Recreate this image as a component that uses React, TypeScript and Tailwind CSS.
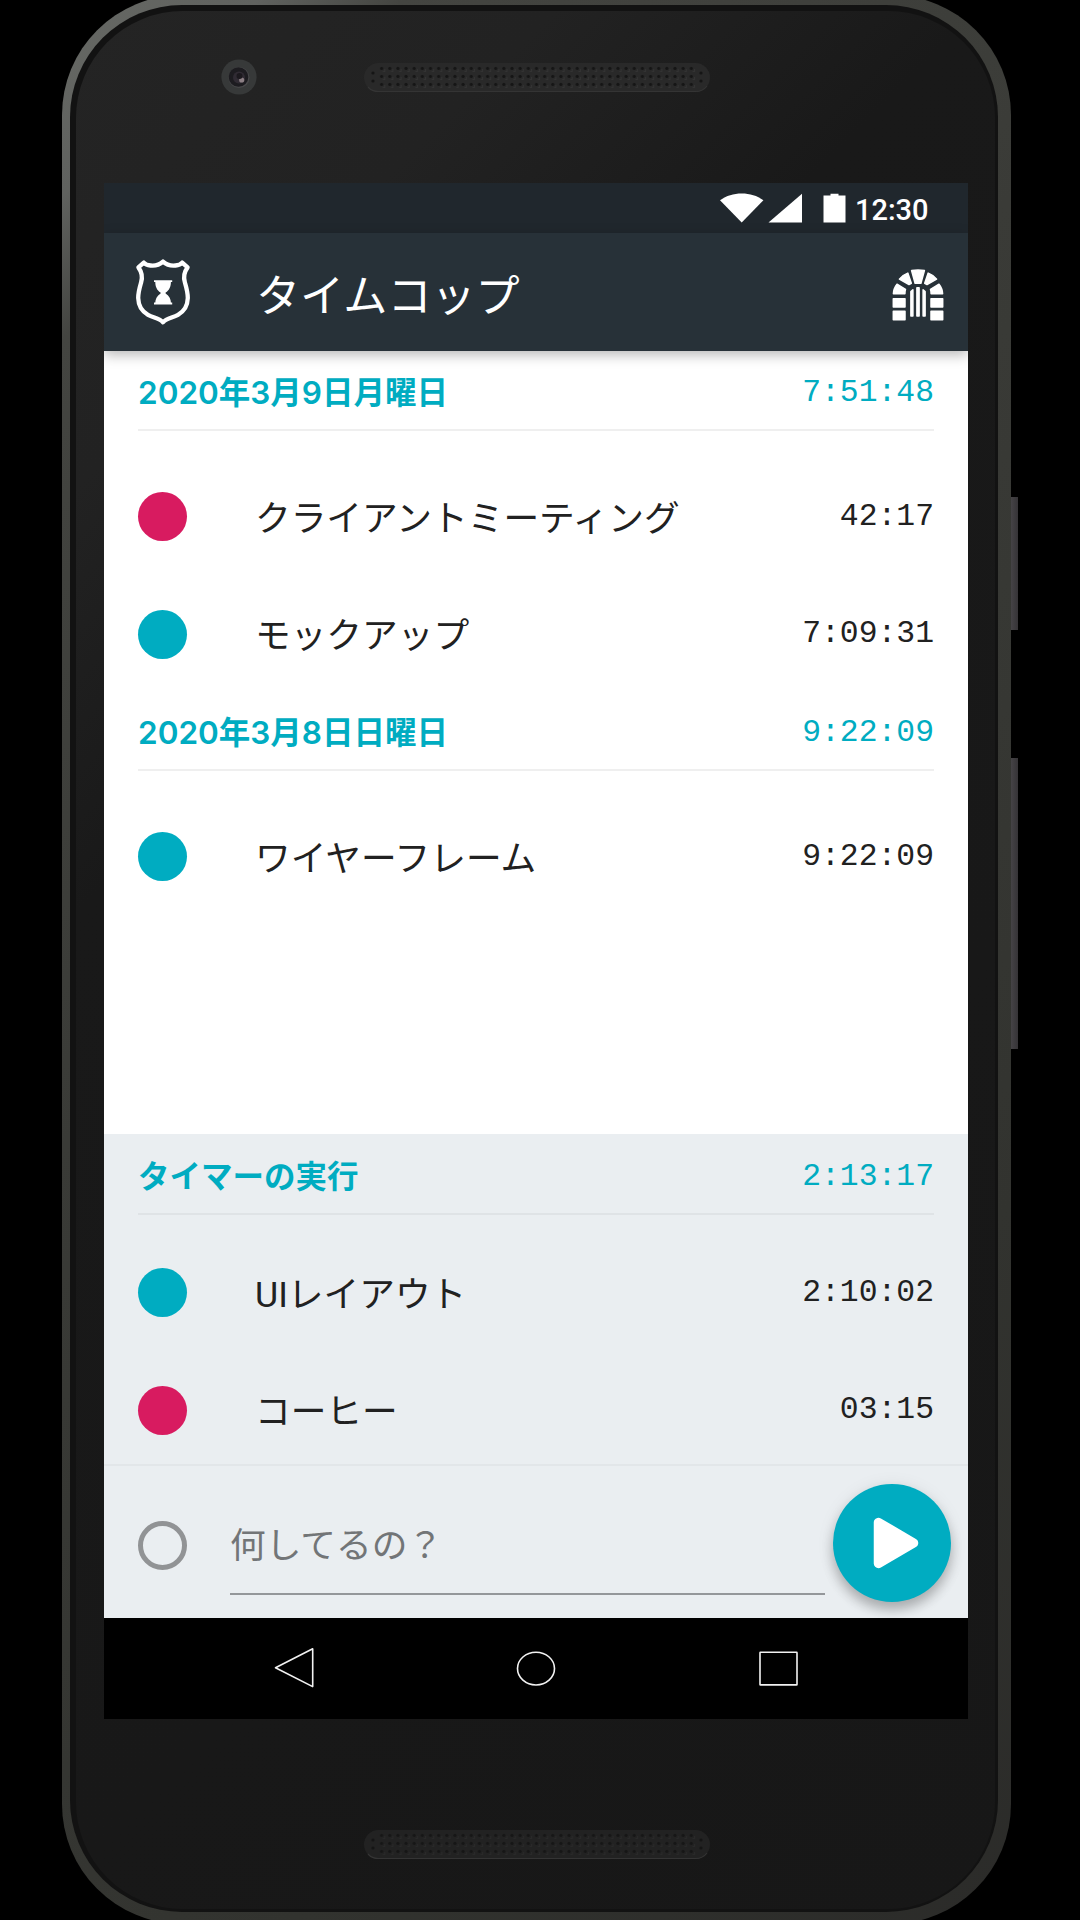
import React from "react";

const CJK = "font-['Noto_Sans_CJK_JP',sans-serif]";
const BODY = "font-['Roboto','Noto_Sans_CJK_JP',sans-serif]";
const MONO = "font-['Liberation_Mono','Noto_Sans_CJK_JP',monospace]";

type Entry = { name: string; time: string; color: "pink" | "cyan" };

function Speaker({ dim }: { dim?: boolean }) {
  const id = dim ? "mesh-bottom" : "mesh-top";
  return (
    <svg width="348" height="31" viewBox="0 0 348 31" className="block">
      <defs>
        <pattern id={id} width="8.15" height="8" patternUnits="userSpaceOnUse" x="15" y="3">
          <circle cx="3.6" cy="3.4" r="1.6" fill={dim ? "#161616" : "#151515"} />
          <path d="M5 6.4h1.8V4" stroke={dim ? "#292929" : "#333"} strokeWidth="1" fill="none" />
        </pattern>
      </defs>
      <rect x="1" y="1" width="346" height="29" rx="14.5" fill={dim ? "#222222" : "#292929"} />
      <path d="M5 25C8 28.500 11 29.500 15.500 29.500H332.500C337 29.500 341 28 344 24" stroke="#343434" strokeWidth="1.2" fill="none" />
      <rect x="15" y="3" width="318" height="24" fill={`url(#${id})`} />
      {[10, 338].map((x) => (
        <g key={x} fill="#151515">
          <circle cx={x} cy="11" r="1.6" />
          <circle cx={x} cy="19" r="1.6" />
        </g>
      ))}
    </svg>
  );
}

function Camera() {
  return (
    <svg width="36" height="36" viewBox="0 0 36 36" className="block">
      <circle cx="18" cy="18" r="17.600" fill="#373939" />
      <circle cx="18" cy="18.500" r="10.500" fill="#48484a" />
      <circle cx="17.500" cy="18" r="9.800" fill="#1d1c20" />
      <circle cx="18" cy="18.500" r="6" fill="#302b33" />
      <circle cx="20.700" cy="21" r="2.600" fill="#8c7f84" />
      <circle cx="18.500" cy="17" r="3" fill="#1c191e" />
    </svg>
  );
}

function StatusBar() {
  return (
    <div className="flex h-[50px] items-center justify-end bg-[#20272d] pr-[39px]">
      <svg width="126" height="31" viewBox="0 0 126 31" fill="#fff" className="mr-[9px] block">
        <path d="M0 7.300C6.500 2.600 13.500.5 21.700.5S37 2.600 43.400 7.300L21.700 29.500z" />
        <path d="M82 .8v28.700H48.500z" />
        <path d="M103.500 2.500h7V.700h8v1.800h7v27h-22z" />
      </svg>
      <span className="relative top-[2px] w-[74px] whitespace-nowrap font-['Roboto',sans-serif] text-[29px] font-medium leading-none text-white">
        12:30
      </span>
    </div>
  );
}

function ShieldIcon() {
  return (
    <svg width="56" height="68" viewBox="0 0 56 68" className="block">
      <path
        d="M28 3.600C24.500 6.800 20 8 15.500 7.500C12.500 7.200 10 6 8.800 4.600L3.400 9.400C6.800 14 7.800 19 6.100 24.500C4.500 30 3.200 34 3.200 40C3.400 47 6.700 53.300 13 56.800C18.500 59.800 24.500 60.300 28 64.200C31.500 60.300 37.500 59.800 43 56.800C49.300 53.300 52.600 47 52.800 40C52.800 34 51.500 30 49.900 24.500C48.200 19 49.200 14 52.600 9.400L47.200 4.600C46 6 43.500 7.200 40.500 7.500C36 8 31.500 6.800 28 3.600Z"
        fill="none"
        stroke="#fff"
        strokeWidth="4.300"
        strokeLinejoin="round"
      />
      <path
        d="M19 22.200h18.200v1.800h-1.300c0 4.500-1.500 8.200-5.300 10.600v.8c3.800 2.400 5.300 6.100 5.300 9.100h1.300v1.900H19v-1.900h1.300c0-3 1.500-6.700 5.300-9.100v-.8c-3.800-2.400-5.300-6.100-5.300-10.600H19z"
        fill="#fff"
      />
    </svg>
  );
}

function DoorIcon() {
  return (
    <svg width="52" height="52" viewBox="0 0 52 52" fill="#fff" stroke="#fff" strokeWidth="1.500" strokeLinejoin="round" className="block">
      <path d="M19.600 1.600C24 .7 28 .7 32.400 1.600L28.900 14.200H23.100z" />
      <path d="M15.800 4.100L19.300 14.300L17 15.500L7.400 10.100C9.500 7.500 12.500 5.300 15.800 4.100z" />
      <path d="M36.200 4.100L32.700 14.300L35 15.500L44.600 10.100C42.500 7.500 39.500 5.300 36.200 4.100z" />
      <path d="M5 15.200L13.500 20.300C13 21.800 12.900 23 12.900 24.800H1.400C1.500 21 2.800 18 5 15.200z" />
      <path d="M47 15.200L38.500 20.300C39 21.800 39.100 23 39.100 24.800H50.600C50.500 21 49.200 18 47 15.200z" />
      <path d="M1.300 29.800h11.700v8.200H1.300zM39 29.800h11.700v8.200H39zM1.300 42.300h11.700v8.400H1.300zM39 42.300h11.700v8.400H39z" />
      <path d="M24.900 18.800h2.200v28.200h-2.200zM18.900 22.500l2-1.800v26.300h-2zM33.100 22.500l-2-1.800v26.300h2z" />
    </svg>
  );
}

function AppBar() {
  return (
    <header className="relative z-10 flex h-[118px] items-center bg-[#273138] pl-[31px] pr-[24px] shadow-[0_4px_12px_rgba(0,0,0,0.28)]">
      <ShieldIcon />
      <h1 className={`ml-[65px] mt-[3px] flex-1 whitespace-nowrap text-[44.100px] leading-none text-white ${CJK}`}>タイムコップ</h1>
      <div className="mt-[5px]">
        <DoorIcon />
      </div>
    </header>
  );
}

function SectionHeader({ title, time, height, line }: { title: string; time: string; height: string; line: string }) {
  return (
    <div className={`mx-[34px] flex items-end justify-between border-b-2 ${line} ${height}`}>
      <h2 className="mb-[16px] whitespace-nowrap font-['Inter','Noto_Sans_CJK_JP',sans-serif] text-[31.500px] font-semibold leading-[40px] text-[#00acc1]">
        {title}
      </h2>
      <span className={`mb-[16px] text-[31.400px] leading-[40px] text-[#00acc1] ${MONO}`}>{time}</span>
    </div>
  );
}

function TimerRow({ entry }: { entry: Entry }) {
  return (
    <div className="flex h-[117.500px] items-center px-[34px]">
      <span className={`size-[49px] rounded-full ${entry.color === "pink" ? "bg-[#d81b60]" : "bg-[#00acc1]"}`} />
      <span className={`ml-[68px] mt-[4px] flex-1 whitespace-nowrap text-[35.700px] leading-[40px] text-[#212121] ${BODY}`}>
        {entry.name}
      </span>
      <span className={`text-[31.400px] leading-[40px] text-[#212121] ${MONO}`}>{entry.time}</span>
    </div>
  );
}

function NewTimer() {
  return (
    <div className="relative -mt-[5px] flex h-[154px] items-center border-t-2 border-[#e2e6e9] pl-[34px] pr-[16px]">
      <span className="mt-[6px] size-[49px] shrink-0 rounded-full border-[5px] border-[#919395]" />
      <div className="ml-[43px] mt-[20px] h-[86px] w-[595px] shrink-0 border-b-2 border-[#94979a]">
        <span className={`relative top-[14px] whitespace-nowrap text-[35.700px] leading-[40px] text-[#727577] ${CJK}`}>
          何してるの？
        </span>
      </div>
      <button className="ml-[8px] mt-[2px] flex size-[118px] shrink-0 items-center justify-center rounded-full bg-[#00acc1] shadow-[0_8px_12px_rgba(0,0,0,0.24),0_2px_18px_rgba(0,0,0,0.08)]">
        <svg width="46" height="52" viewBox="0 0 46 52" className="ml-[8px] block">
          <path d="M5.500 5.500V46.500L40.500 26z" fill="#fff" stroke="#fff" strokeWidth="9.500" strokeLinejoin="round" />
        </svg>
      </button>
    </div>
  );
}

function NavBar() {
  return (
    <nav className="flex h-[101px] items-center bg-black pb-[2px] pl-[168px] pr-[168px]">
      <svg width="528" height="44" viewBox="0 0 528 44" fill="none" stroke="#f2f2f2" strokeWidth="1.600" strokeLinejoin="round" className="block">
        <path d="M3.500 21.700L40.700 2.800V40.600z" />
        <ellipse cx="264" cy="22.600" rx="18.500" ry="16.400" />
        <rect x="488" y="6.300" width="37" height="32.600" rx="0.500" />
      </svg>
    </nav>
  );
}

export default function App() {
  return (
    <div className="h-[1920px] w-[1080px] overflow-hidden bg-black">
      <div className="relative ml-[62px] -mt-[5px] h-[1929px] w-[949px]">
        <span className="absolute left-[947px] top-[502px] h-[133px] w-[9px] bg-linear-to-r from-[#4a484b] to-[#353336]" />
        <span className="absolute left-[947px] top-[763px] h-[291px] w-[9px] bg-linear-to-r from-[#4a484b] to-[#353336]" />
        <div className="relative h-full rounded-[120px] bg-[linear-gradient(135deg,#666864_0%,#60625f_7%,#444541_12%,#3a3b37_40%,#32332f_75%,#2b2b29_100%)] pb-[12px] pl-[8px] pr-[13px] pt-[10px]">
          <div className="h-full rounded-[112px] bg-[#121212] pb-[3px] pl-[6px] pr-[3px] pt-[6px]">
            <div className="flex h-full flex-col rounded-[107px] bg-[linear-gradient(135deg,#242424_0%,#222222_17%,#191919_32%,#171717_100%)] pl-[28px]">
              <div className="flex h-[172px] items-start">
                <div className="ml-[117px] mt-[48px]">
                  <Camera />
                </div>
                <div className="ml-[106px] mt-[51px]">
                  <Speaker />
                </div>
              </div>
              <main className="flex h-[1536px] w-[864px] flex-col overflow-hidden">
                <StatusBar />
                <AppBar />
                <section className="h-[783px] bg-white">
                  <SectionHeader title="2020年3月9日月曜日" time="7:51:48" height="h-[80px]" line="border-[#efefef]" />
                  <div className="pt-[27px]">
                    <TimerRow entry={{ name: "クライアントミーティング", time: "42:17", color: "pink" }} />
                    <TimerRow entry={{ name: "モックアップ", time: "7:09:31", color: "cyan" }} />
                  </div>
                  <SectionHeader title="2020年3月8日日曜日" time="9:22:09" height="h-[78px]" line="border-[#efefef]" />
                  <div className="pt-[27px]">
                    <TimerRow entry={{ name: "ワイヤーフレーム", time: "9:22:09", color: "cyan" }} />
                  </div>
                </section>
                <section className="h-[484px] bg-[#eaeef1]">
                  <SectionHeader title="タイマーの実行" time="2:13:17" height="h-[81px]" line="border-[#dfe3e6]" />
                  <div className="pt-[19px]">
                    <TimerRow entry={{ name: "UIレイアウト", time: "2:10:02", color: "cyan" }} />
                    <TimerRow entry={{ name: "コーヒー", time: "03:15", color: "pink" }} />
                  </div>
                  <NewTimer />
                </section>
                <NavBar />
              </main>
              <div className="ml-[259px] mt-[110px]">
                <Speaker dim />
              </div>
            </div>
          </div>
        </div>
      </div>
    </div>
  );
}
